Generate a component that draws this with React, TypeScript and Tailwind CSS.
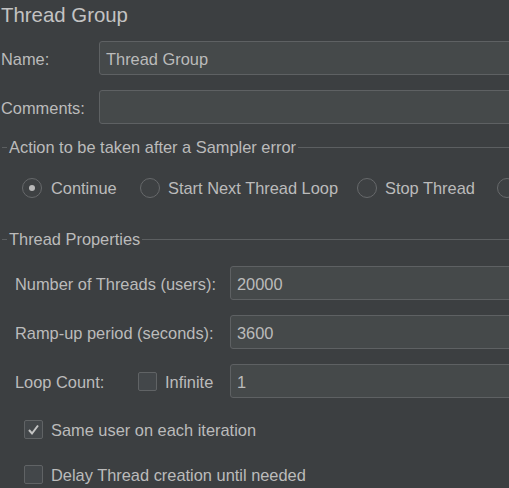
import React from 'react';

const field =
  'h-[34px] w-[600px] shrink-0 rounded-[3px] border border-[#5e6163] bg-[#45494a] pl-[6px] pt-[2px] flex items-center text-[#bbbbbb]';

function Radio({ checked = false }: { checked?: boolean }) {
  return (
    <span className="flex h-[20px] w-[20px] shrink-0 items-center justify-center rounded-full border-[1.5px] border-[#67696b] bg-[#3e4143]">
      {checked && <span className="h-[6px] w-[6px] rounded-full bg-[#b9b9b9]" />}
    </span>
  );
}

function Check({ checked = false }: { checked?: boolean }) {
  return (
    <span className="flex h-[19px] w-[19px] shrink-0 items-center justify-center rounded-[2px] border border-[#606365] bg-[#43474a]">
      {checked && (
        <svg width="13" height="13" viewBox="0 0 13 13">
          <path d="M2 7 L5 10.5 L11 2.5" fill="none" stroke="#c4c4c4" strokeWidth="2" />
        </svg>
      )}
    </span>
  );
}

function Titled({ label }: { label: string }) {
  return (
    <div className="flex h-[20px] items-center">
      <span className="ml-[2px] h-px w-[5px] bg-[#5c5f61]" />
      <span className="px-[2px] pt-[1px]">{label}</span>
      <span className="h-px flex-1 bg-[#5c5f61]" />
    </div>
  );
}

export default function App() {
  return (
    <div
      className="flex h-[488px] w-[509px] flex-col overflow-hidden bg-[#3c3f41] text-[16.4px] text-[#bbbbbb]"
      style={{ fontFamily: '"Liberation Sans", Arial, sans-serif' }}
    >
      <div className="flex h-[30px] items-center pl-[1px] text-[20.4px] text-[#c3c3c3]">Thread Group</div>

      <div className="mt-[11px] flex items-center">
        <span className="w-[99px] shrink-0 pl-[1px] pt-[2px]">Name:</span>
        <div className={field}>Thread Group</div>
      </div>

      <div className="mt-[15px] flex items-center">
        <span className="w-[99px] shrink-0 pl-[1px] pt-[2px]">Comments:</span>
        <div className={field} />
      </div>

      <div className="mt-[13px]">
        <Titled label="Action to be taken after a Sampler error" />
      </div>

      <div className="mt-[21px] flex h-[20px] items-center pl-[22px]">
        <Radio checked />
        <span className="ml-[9px] w-[89px] shrink-0 pt-[1px]">Continue</span>
        <Radio />
        <span className="ml-[8px] w-[189px] shrink-0 pt-[1px]">Start Next Thread Loop</span>
        <Radio />
        <span className="ml-[8px] w-[112px] shrink-0 pt-[1px]">Stop Thread</span>
        <Radio />
      </div>

      <div className="mt-[31px]">
        <Titled label="Thread Properties" />
      </div>

      <div className="mt-[17px] flex items-center pl-[15px]">
        <span className="w-[215px] shrink-0 pt-[2px]">Number of Threads (users):</span>
        <div className={field}>20000</div>
      </div>

      <div className="mt-[15px] flex items-center pl-[15px]">
        <span className="w-[215px] shrink-0 pt-[2px]">Ramp-up period (seconds):</span>
        <div className={field}>3600</div>
      </div>

      <div className="mt-[15px] flex items-center pl-[15px]">
        <span className="w-[123px] shrink-0 pt-[2px]">Loop Count:</span>
        <Check />
        <span className="ml-[8px] w-[65px] shrink-0 pt-[2px]">Infinite</span>
        <div className={field}>1</div>
      </div>

      <div className="mt-[21px] flex h-[20px] items-center pl-[24px]">
        <Check checked />
        <span className="ml-[8px] pt-[2px]">Same user on each iteration</span>
      </div>

      <div className="mt-[25px] flex h-[20px] items-center pl-[24px]">
        <Check />
        <span className="ml-[8px] pt-[2px]">Delay Thread creation until needed</span>
      </div>
    </div>
  );
}
